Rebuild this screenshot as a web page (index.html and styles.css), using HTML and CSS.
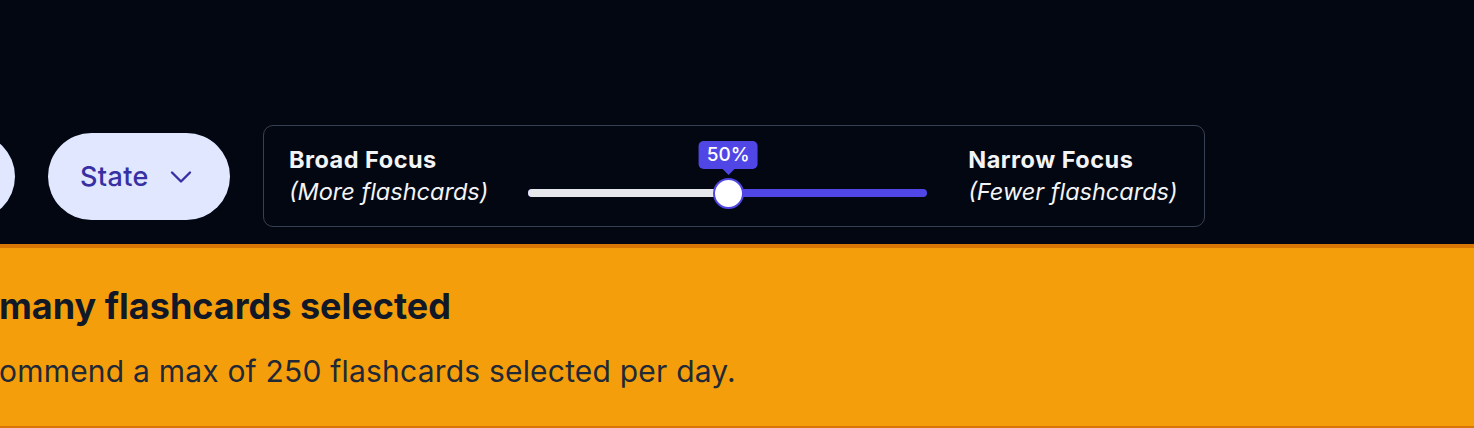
FILE: index.html
```html
<!DOCTYPE html>
<html lang="en">
<head>
<meta charset="utf-8">
<title>Flashcard filters</title>
<link rel="stylesheet" href="styles.css">
</head>
<body>
  <div class="toolbar">
    <button class="pill pill-prev" aria-label="Previous filter"></button>
    <button class="pill">
      <span>State</span>
      <svg class="chev" width="22" height="14" viewBox="0 0 22 14" fill="none"><path d="M2 2.5l9 9 9-9" stroke="#3730a3" stroke-width="2.4" stroke-linecap="round" stroke-linejoin="round"/></svg>
    </button>
    <div class="focus-box">
      <div class="label">
        <div class="label-title">Broad Focus</div>
        <div class="label-sub">(More flashcards)</div>
      </div>
      <div class="slider">
        <div class="track"><div class="track-fill" style="width:50%"></div></div>
        <div class="thumb" style="left:50%">
          <div class="tip">50%</div>
        </div>
      </div>
      <div class="label">
        <div class="label-title">Narrow Focus</div>
        <div class="label-sub">(Fewer flashcards)</div>
      </div>
    </div>
  </div>
  <div class="banner">
    <div class="banner-inner">
      <h2 class="banner-title">many flashcards selected</h2>
      <p class="banner-text">ommend a max of 250 flashcards selected per day.</p>
    </div>
  </div>
</body>
</html>
```
FILE: styles.css
```css
* { box-sizing: border-box; }
html, body { margin: 0; padding: 0; }
body {
  background: #030712;
  font-family: Inter, "Noto Sans", sans-serif;
  overflow: hidden;
  width: 1474px;
  height: 428px;
}
.toolbar {
  display: flex;
  align-items: center;
  gap: 33px;
  padding: 125px 0 17px 0;
  margin-left: -120px;
}
.pill {
  height: 87px;
  border: 0;
  border-radius: 44px;
  background: #e0e7ff;
  color: #3730a3;
  font-family: Inter, sans-serif;
  font-size: 27px;
  letter-spacing: 0.4px;
  font-weight: 500;
  display: flex;
  align-items: center;
  gap: 21px;
  padding: 0 38px 0 32px;
  flex: none;
}
.pill-prev { width: 135px; }
.chev { margin-top: 2px; }
.focus-box {
  height: 102px;
  border: 1px solid #374151;
  border-radius: 10px;
  display: flex;
  align-items: center;
  padding: 0 26px 0 25px;
  flex: none;
}
.label { color: #f3f4f6; font-size: 23.5px; line-height: 32px; }
.label-title { font-weight: 700; letter-spacing: 0.5px; }
.label-sub { font-style: italic; }
.slider {
  position: relative;
  width: 399px;
  height: 31px;
  margin: 34px 41px 0 40px;
}
.track {
  position: absolute;
  left: 0; right: 0; top: 11px;
  height: 8px;
  border-radius: 4px;
  background: #4f46e5;
  overflow: hidden;
}
.track-fill { height: 100%; background: #e5e7eb; }
.thumb {
  position: absolute;
  top: 0;
  width: 31px;
  height: 31px;
  margin-left: -15px;
  border-radius: 50%;
  background: #fff;
  border: 2px solid #4f46e5;
}
.tip {
  position: absolute;
  left: 50%;
  bottom: 38px;
  transform: translateX(-50%);
  background: #4f46e5;
  color: #fff;
  font-size: 19px;
  font-weight: 500;
  line-height: 28px;
  padding: 0 8px;
  border-radius: 5px;
  white-space: nowrap;
}
.tip::after {
  content: "";
  position: absolute;
  left: 50%;
  top: 100%;
  margin-left: -6px;
  border: 6px solid transparent;
  border-top-color: #4f46e5;
}
.banner {
  background: #f59e0b;
  border-top: 4px solid #d97706;
  border-bottom: 4px solid #d97706;
  height: 186px;
}
.banner-inner { padding-top: 36px; }
.banner-title {
  margin: 0 0 0 -1px;
  font-size: 36px;
  font-weight: 700;
  line-height: 44px;
  color: #111827;
}
.banner-text {
  margin: 23px 0 0 -1px;
  font-size: 30px;
  letter-spacing: 0.2px;
  line-height: 40px;
  color: #1f2937;
}
```
